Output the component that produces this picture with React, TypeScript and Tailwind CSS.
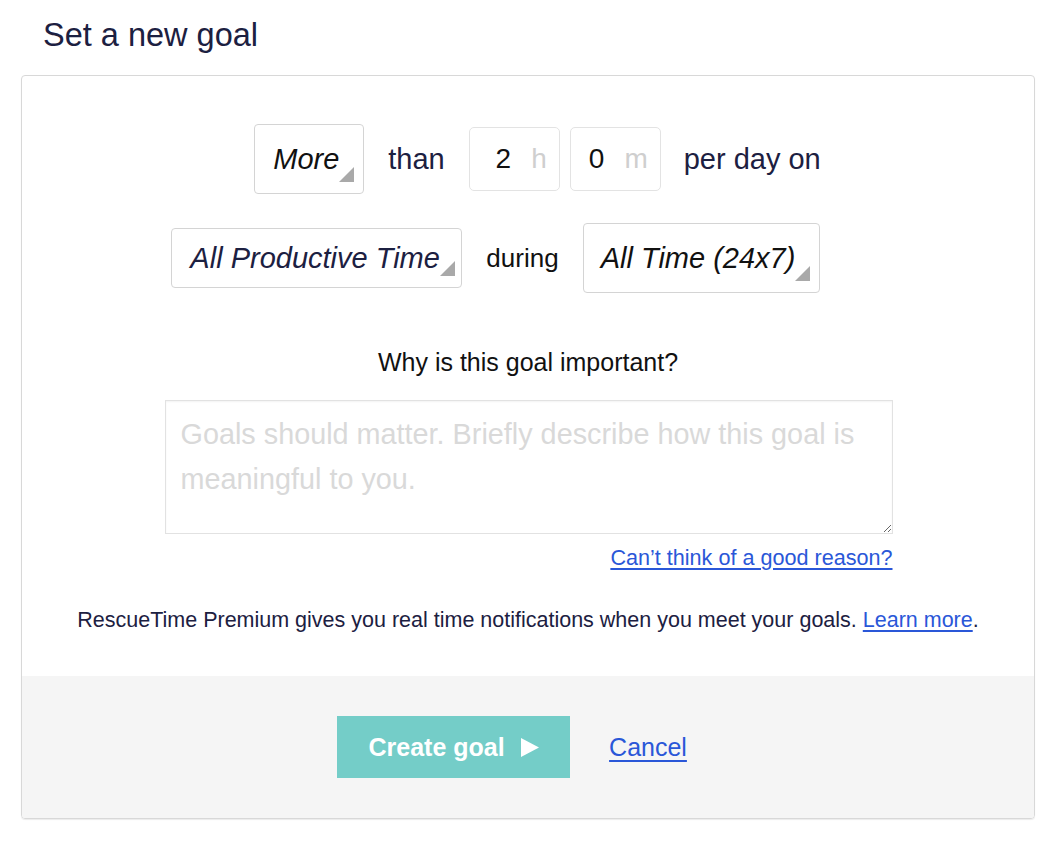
import React from "react";

const font = { fontFamily: '"Liberation Sans", Arial, sans-serif' };

const Corner = () => (
  <svg width="15" height="15" viewBox="0 0 15 15" className="shrink-0 self-end">
    <polygon points="15,0 15,15 0,15" fill="#a9a9a9" />
  </svg>
);

const SelectBox = ({
  label,
  className,
  textClass,
}: {
  label: string;
  className: string;
  textClass?: string;
}) => (
  <div className={`flex items-stretch border border-[#d4d4d4] rounded-[4px] bg-white ${className}`}>
    <span className={`self-center italic text-[29px] leading-none whitespace-nowrap ${textClass ?? "text-[#111]"}`}>{label}</span>
    <div className="flex flex-col justify-end pb-[11px]">
      <Corner />
    </div>
  </div>
);

const TimeBox = ({ value, unit, pr }: { value: string; unit: string; pr: string }) => (
  <div
    className={`flex items-center justify-end gap-[20px] w-[91px] h-[64px] border border-[#e3e3e3] rounded-[5px] bg-white text-[28px] leading-none ${pr}`}
  >
    <span className="text-[#111]">{value}</span>
    <span className="text-[#cfcfcf]">{unit}</span>
  </div>
);

export default function App() {
  return (
    <div className="min-h-[850px] bg-white text-[#1c2041]" style={font}>
      <h1 className="pl-[43px] pt-[19px] text-[32.5px] leading-[32px] font-normal">Set a new goal</h1>

      <div className="ml-[21px] mt-[24px] w-[1014px] border border-[#d8d8d8] rounded-[4px] overflow-hidden shadow-[0_1px_1px_rgba(0,0,0,0.08)]">
        <div className="flex flex-col items-center pt-[48px] pb-[45px]">
          {/* amount row */}
          <div className="flex items-center pl-[19px]">
            <SelectBox label="More" className="h-[70px] pl-[18px] w-[110px]" />
            <span className="mx-[24px] text-[29px] leading-none">than</span>
            <TimeBox value="2" unit="h" pr="pr-[12px]" />
            <div className="w-[10px]" />
            <TimeBox value="0" unit="m" pr="pr-[12px]" />
            <span className="ml-[23px] text-[29px] leading-none">per day on</span>
          </div>

          {/* category row */}
          <div className="flex items-center mt-[29px] pr-[65px]">
            <SelectBox
              label="All Productive Time"
              className="h-[60px] pl-[18px] w-[291px]"
              textClass="text-[#1c2041]"
            />
            <span className="mx-[24px] text-[26px] leading-none text-[#111]">during</span>
            <SelectBox label="All Time (24x7)" className="h-[70px] pl-[17px] w-[237px]" />
          </div>

          <p className="mt-[57px] text-[25px] leading-none text-[#111]">Why is this goal important?</p>

          <textarea
            className="mt-[25px] ml-[1px] w-[728px] h-[134px] border border-[#e2e2e2] shadow-[inset_0_1px_2px_rgba(0,0,0,0.05)] pl-[15px] pt-[11px] text-[28.8px] leading-[45px] text-[#333] placeholder:text-[#d9d9d9] outline-none resize"
            placeholder="Goals should matter. Briefly describe how this goal is meaningful to you."
          />

          <div className="w-[728px] ml-[1px] mt-[13px] flex justify-end">
            <a href="#" className="text-[21.6px] leading-none text-[#2a57d8] underline underline-offset-[3px]">
              Can’t think of a good reason?
            </a>
          </div>

          <p className="mt-[41px] text-[21.5px] leading-none text-[#1c2041]">
            RescueTime Premium gives you real time notifications when you meet your goals.{" "}
            <a href="#" className="text-[#2a57d8] underline underline-offset-[3px]">
              Learn more
            </a>
            .
          </p>
        </div>

        {/* footer */}
        <div className="h-[142px] bg-[#f5f5f5] flex items-center justify-center pr-[32px]">
          <button className="w-[233px] h-[62px] bg-[#74cdc8] text-white font-bold text-[25px] leading-none flex items-center justify-center gap-[15px]">
            Create goal
            <svg width="19" height="19" viewBox="0 0 19 19">
              <polygon points="1,0 19,9.5 1,19" fill="#fff" />
            </svg>
          </button>
          <a href="#" className="ml-[39px] text-[25px] leading-none text-[#2a57d8] underline underline-offset-[4px]">
            Cancel
          </a>
        </div>
      </div>
    </div>
  );
}
